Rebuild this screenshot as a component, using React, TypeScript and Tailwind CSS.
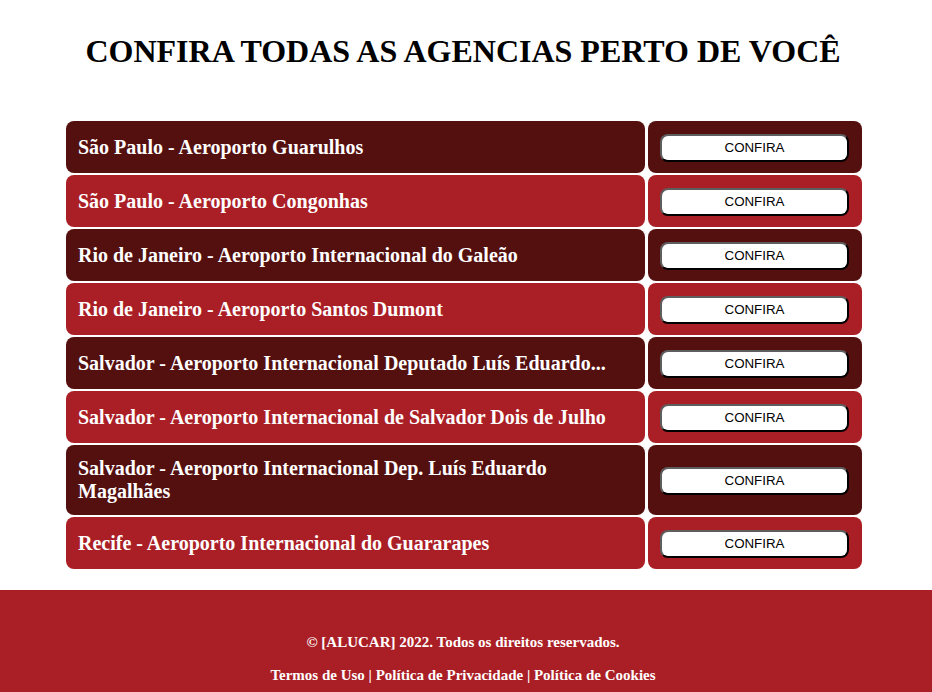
import React from "react";

interface Agencia {
  nome: string;
}

// Lista de agências exibidas na tabela
const agencias: Agencia[] = [
  { nome: "São Paulo - Aeroporto Guarulhos" },
  { nome: "São Paulo - Aeroporto Congonhas" },
  { nome: "Rio de Janeiro - Aeroporto Internacional do Galeão" },
  { nome: "Rio de Janeiro - Aeroporto Santos Dumont" },
  { nome: "Salvador - Aeroporto Internacional Deputado Luís Eduardo..." },
  { nome: "Salvador - Aeroporto Internacional de Salvador Dois de Julho" },
  { nome: "Salvador - Aeroporto Internacional Dep. Luís Eduardo Magalhães" },
  { nome: "Recife - Aeroporto Internacional do Guararapes" },
];

const App: React.FC = () => {
  return (
    <div className="min-h-[692px] flex flex-col bg-white font-['Liberation_Serif',serif]">
      <h1 className="text-center text-[32px] font-bold text-black leading-[37px] mt-[33px] pr-[6px]">
        CONFIRA TODAS AS AGENCIAS PERTO DE VOCÊ
      </h1>

      <div className="w-[796px] ml-[66px] mt-[51px] grid grid-cols-[579px_214px] gap-x-[3px] gap-y-[2px]">
        {agencias.map((a, i) => {
          const bg = i % 2 === 0 ? "bg-[#540f0f]" : "bg-[#aa1e25]";
          return (
            <React.Fragment key={i}>
              <div
                className={`${bg} rounded-lg px-3 py-3 flex items-center text-white font-bold text-[20px] leading-[23px]`}
              >
                <span>{a.nome}</span>
              </div>
              <div className={`${bg} rounded-lg px-3 pt-[13px] pb-[11px] flex items-center`}>
                <button
                  type="button"
                  className="w-[189px] h-[28px] bg-white rounded-lg border-2 border-t-[#5e5e5e] border-l-[#5e5e5e] border-b-black border-r-black text-black text-[13.333px] font-['Liberation_Sans',Arial,sans-serif] flex items-center justify-center"
                >
                  CONFIRA
                </button>
              </div>
            </React.Fragment>
          );
        })}
      </div>

      <footer className="mt-[21px] flex-1 bg-[#aa1e25] text-white font-bold text-[15px] text-center pt-[43px] pb-[6px] pr-[6px]">
        <p className="leading-[18px]">© [ALUCAR] 2022. Todos os direitos reservados.</p>
        <p className="leading-[18px] mt-[15px]">
          <a className="text-white">Termos de Uso</a> | <a className="text-white">Política de Privacidade</a> |{" "}
          <a className="text-white">Política de Cookies</a>
        </p>
      </footer>
    </div>
  );
};

export default App;
